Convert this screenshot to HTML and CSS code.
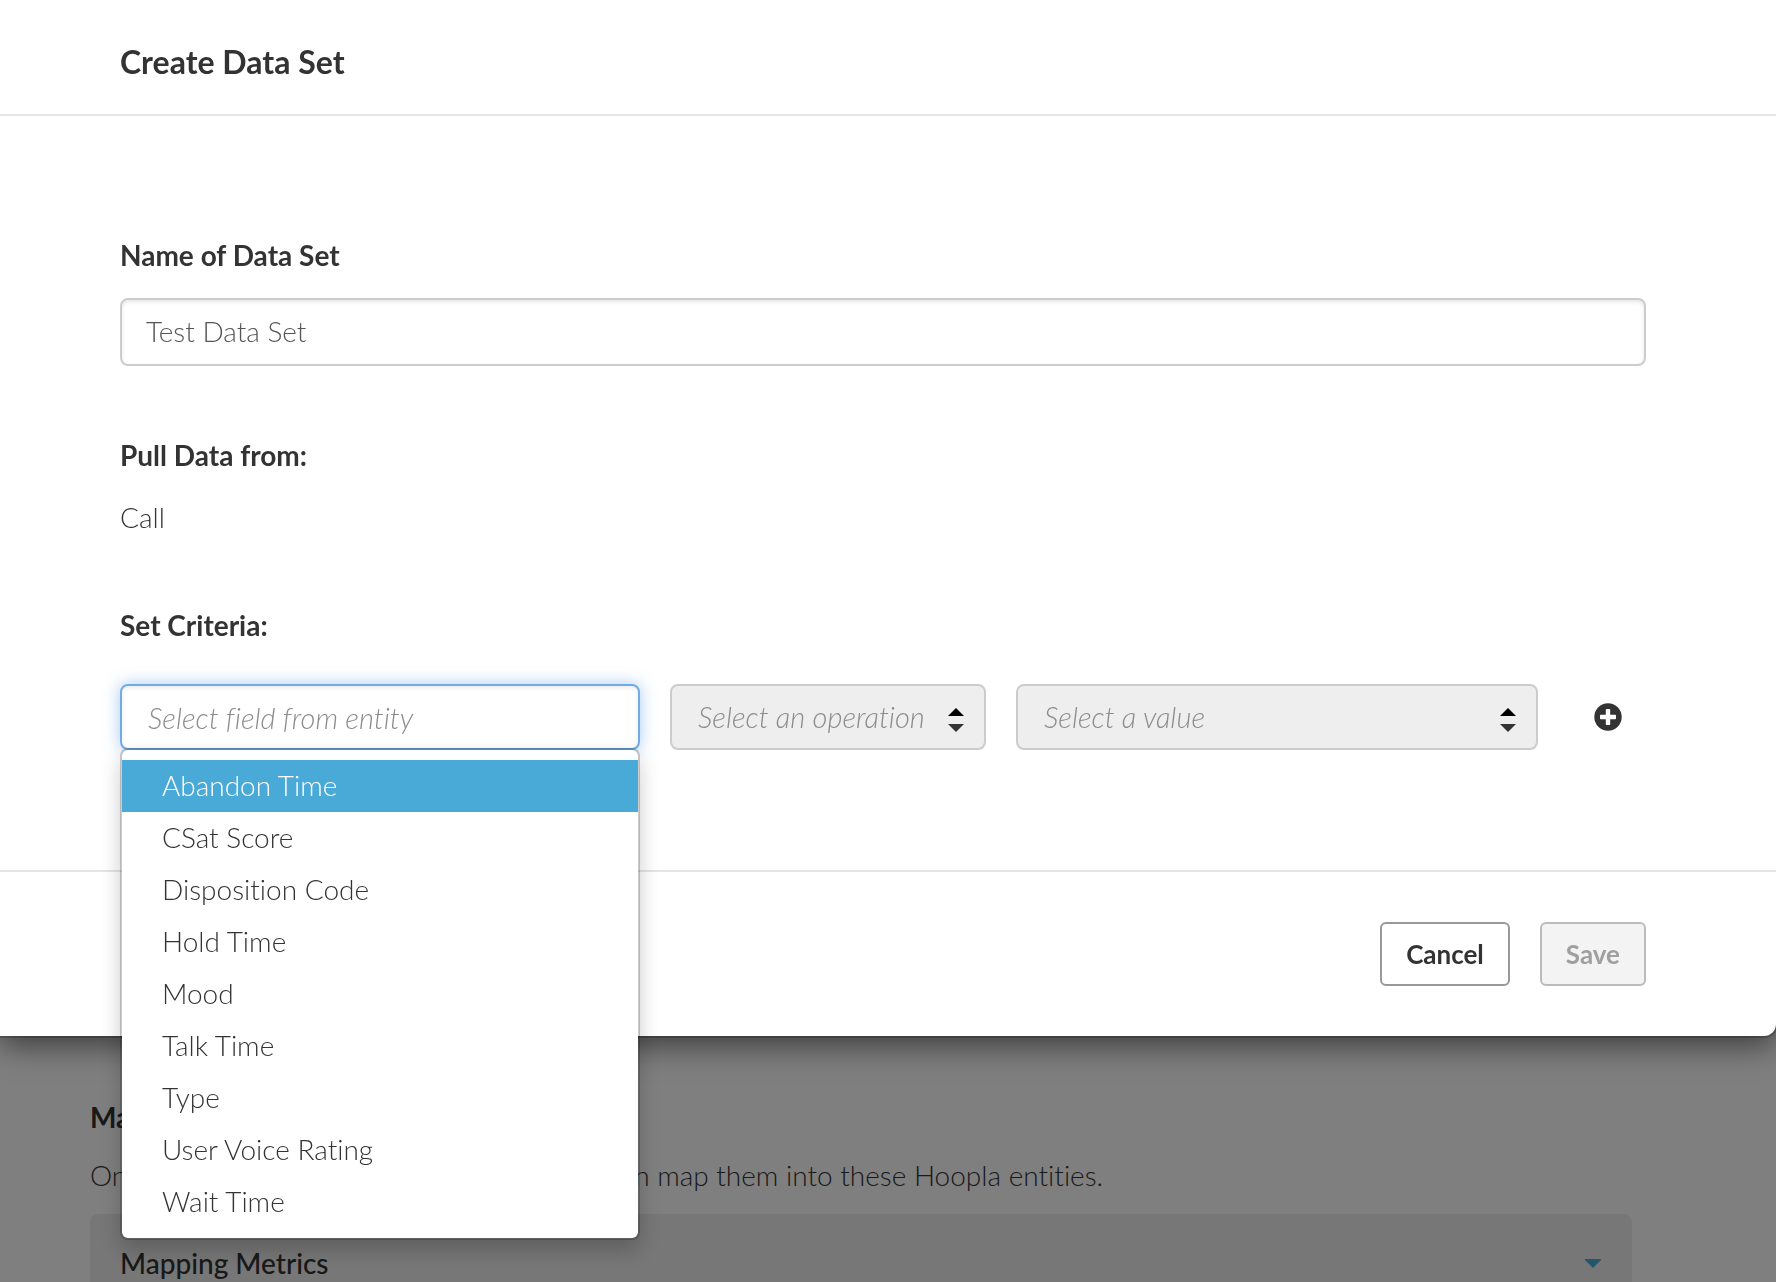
FILE: index.html
```html
<!DOCTYPE html>
<html lang="en">
<head>
<meta charset="utf-8">
<meta name="viewport" content="width=device-width, initial-scale=1">
<title>Create Data Set</title>
<link rel="stylesheet" href="styles.css">
</head>
<body>
<main class="page">
  <h2 class="page-heading">Mapping</h2>
  <p class="page-text">Once you have created new data sets, you can map them into these Hoopla entities.</p>
  <section class="panel">
    <h3 class="panel-title">Mapping Metrics</h3>
    <svg class="panel-caret" viewBox="0 0 16 9" aria-hidden="true"><path d="M0 0h16v1L8 9 0 1z"/></svg>
  </section>
</main>
<div class="backdrop"></div>

<form class="modal" role="dialog" aria-labelledby="modal-title">
  <header class="modal-header">
    <h1 class="modal-title" id="modal-title">Create Data Set</h1>
  </header>
  <div class="modal-body">
    <div class="group">
      <label class="label" for="name">Name of Data Set</label>
      <input class="control name-input" id="name" type="text" value="Test Data Set">
    </div>
    <div class="group source">
      <h2 class="label">Pull Data from:</h2>
      <p class="value">Call</p>
    </div>
    <div class="group criteria">
      <h2 class="label">Set Criteria:</h2>
      <div class="criteria-row">
        <div class="field">
          <input class="control field-input" type="text" role="combobox" aria-expanded="true" aria-controls="field-menu" aria-label="Field" placeholder="Select field from entity">
          <ul class="menu" id="field-menu" role="listbox">
            <li class="option option-active" role="option" aria-selected="true">Abandon Time</li>
            <li class="option" role="option">CSat Score</li>
            <li class="option" role="option">Disposition Code</li>
            <li class="option" role="option">Hold Time</li>
            <li class="option" role="option">Mood</li>
            <li class="option" role="option">Talk Time</li>
            <li class="option" role="option">Type</li>
            <li class="option" role="option">User Voice Rating</li>
            <li class="option" role="option">Wait Time</li>
          </ul>
        </div>
        <div class="field">
          <select class="control select" aria-label="Operation" disabled><option>Select an operation</option></select>
          <svg class="arrows" viewBox="0 0 16 24" aria-hidden="true"><path d="M8 0l8 8H0z" fill="#000"/><path d="M0 16h16l-8 8z" fill="#333"/></svg>
        </div>
        <div class="field">
          <select class="control select" aria-label="Value" disabled><option>Select a value</option></select>
          <svg class="arrows" viewBox="0 0 16 24" aria-hidden="true"><path d="M8 0l8 8H0z" fill="#000"/><path d="M0 16h16l-8 8z" fill="#333"/></svg>
        </div>
        <button class="add" type="button" aria-label="Add criterion">
          <svg class="add-icon" viewBox="0 0 28 28" aria-hidden="true"><circle cx="14" cy="14" r="13.7" fill="#333"/><path d="M12.6 6h2.8q.8 0 .8.8v5h5q.8 0 .8.8v2.8q0 .8-.8.8h-5v5q0 .8-.8.8h-2.8q-.8 0-.8-.8v-5h-5q-.8 0-.8-.8v-2.8q0-.8.8-.8h5v-5q0-.8.8-.8z" fill="#fff"/></svg>
        </button>
      </div>
    </div>
  </div>
  <footer class="modal-footer">
    <button class="button" type="button">Cancel</button>
    <button class="button" type="submit" disabled>Save</button>
  </footer>
</form>
</body>
</html>
```

FILE: styles.css
```css
* {
  box-sizing: border-box;
}

body {
  margin: 0;
  height: 100vh;
  overflow: hidden;
  background: #fff;
  color: #333;
  font-family: Lato, "Liberation Sans", sans-serif;
  font-size: 28px;
  font-weight: 300;
  font-variant-ligatures: none;
  line-height: 34px;
}

h1, h2, h3, p, ul {
  margin: 0;
  padding: 0;
}

input, select, button {
  font: inherit;
  color: inherit;
}

/* Page behind the dialog */
.page {
  padding: 1100px 144px 0 90px;
}

.page-heading {
  font-size: 28px;
  font-weight: 700;
}

.page-text {
  margin: 24px 0 22px;
}

.panel {
  display: flex;
  align-items: center;
  justify-content: space-between;
  padding: 32px 31px 32px 30px;
  border-radius: 8px;
  background: #eee;
}

.panel-title {
  font-size: 28px;
  font-weight: 500;
}

.panel-caret {
  width: 16px;
  height: 9px;
  fill: #4aaad7;
}

.backdrop {
  position: fixed;
  inset: 0;
  background: rgba(0, 0, 0, 0.5);
}

/* Dialog */
.modal {
  position: absolute;
  top: 0;
  left: 0;
  right: 0;
  border-radius: 0 0 12px 0;
  background: #fff;
  box-shadow: 0 0 0 2px rgba(0, 0, 0, 0.2), 0 10px 30px rgba(0, 0, 0, 0.5);
}

.modal-header {
  padding: 43px 130px 33px 120px;
  border-bottom: 2px solid #e5e5e5;
}

.modal-title {
  font-size: 32px;
  font-weight: 700;
  line-height: 38px;
}

.modal-body {
  display: flex;
  flex-direction: column;
  gap: 72px;
  padding: 122px 130px 120px 120px;
}

.group {
  display: flex;
  flex-direction: column;
  gap: 26px;
}

.source {
  gap: 28px;
  padding-bottom: 2px;
}

.criteria {
  gap: 42px;
}

.label {
  font-size: 28px;
  font-weight: 700;
}

.control {
  display: block;
  width: 100%;
  height: 66px;
  padding: 0 24px;
  border: 2px solid #ccc;
  border-radius: 8px;
  background: #fff;
  outline: 0;
}

.name-input {
  height: 68px;
  padding-bottom: 2px;
  color: #555;
  box-shadow: inset 0 2px 4px rgba(0, 0, 0, 0.1);
}

.criteria-row {
  display: grid;
  grid-template-columns: 520fr 316fr 522fr 80px;
  gap: 30px;
  margin-right: -2px;
}

.field {
  position: relative;
  min-width: 0;
}

.field-input,
.select {
  padding: 0 26px;
  font-size: 29px;
}

.field-input {
  border-color: #72ace3;
  box-shadow: inset 0 2px 4px rgba(0, 0, 0, 0.08), 0 0 16px rgba(82, 150, 230, 0.5);
}

.field-input::placeholder {
  color: #8c8c8c;
  font-style: italic;
  opacity: 1;
}

.select {
  appearance: none;
  padding-right: 48px;
  background: #eee;
  color: #8c8c8c;
  font-style: italic;
  opacity: 1;
}

.arrows {
  position: absolute;
  top: 24px;
  right: 22px;
  width: 16px;
  height: 24px;
}

.menu {
  position: absolute;
  top: 64px;
  left: 0;
  right: 0;
  padding: 10px 0;
  border: 2px solid rgba(0, 0, 0, 0.2);
  border-radius: 8px;
  background: #fff;
  background-clip: padding-box;
  box-shadow: 0 10px 20px rgba(0, 0, 0, 0.2);
  list-style: none;
}

.option {
  padding: 8px 40px 10px;
}

.option-active {
  background: #4aaad7;
  color: #fff;
}

.add {
  display: flex;
  align-items: center;
  justify-content: center;
  padding: 0;
  border: 0;
  background: none;
}

.add-icon {
  width: 28px;
  height: 28px;
}

.modal-footer {
  display: flex;
  justify-content: flex-end;
  gap: 30px;
  padding: 50px 130px 50px 120px;
  border-top: 2px solid #e5e5e5;
}

.button {
  height: 64px;
  padding: 0 24px;
  border: 2px solid #999;
  border-radius: 6px;
  background: #fff;
  font-size: 26px;
  font-weight: 700;
}

.button:disabled {
  border-color: #bbb;
  background: #f3f3f3;
  color: #9f9f9f;
}
```
